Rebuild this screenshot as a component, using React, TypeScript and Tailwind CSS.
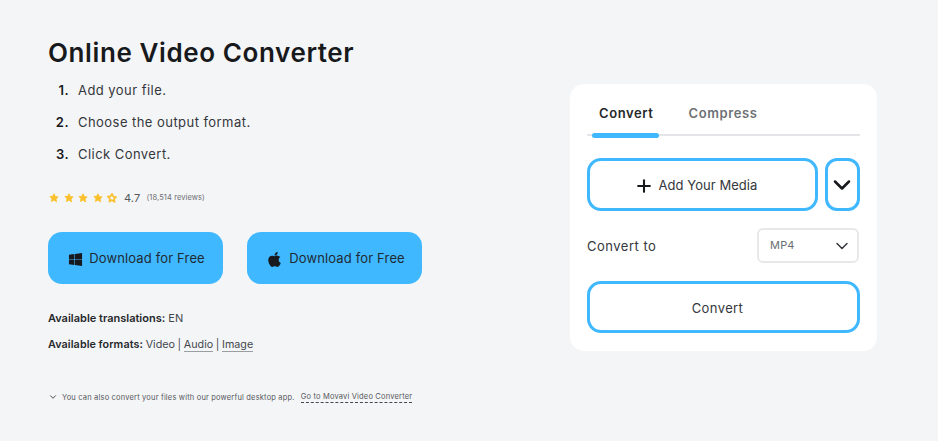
import { ChevronDown, Plus } from "lucide-react";
import { FaApple, FaWindows } from "react-icons/fa";

const steps = ["Add your file.", "Choose the output format.", "Click Convert."];

const Star = ({ half }: { half?: boolean }) => (
    <svg viewBox="0 0 24 24" className="w-[10px] h-[10px]">
        <path
            d="M12 2l3 6.6 7 .9-5.2 4.8 1.4 7.2L12 17l-6.2 3.5 1.4-7.2L2 8.5l7-.9z"
            fill={half ? "none" : "#fbc02d"}
            stroke="#fbc02d"
            strokeWidth={half ? 4 : 2}
            strokeLinejoin="round"
        />
    </svg>
);

const DownloadButton = ({ icon }: { icon: React.ReactNode }) => (
    <button className="w-[175px] h-[52px] rounded-[14px] bg-[#3fb8ff] flex items-center justify-center gap-[6px] pl-[2px] pt-[2px] text-[13px] tracking-[0.15px] text-[#1f2a33]">
        {icon}
        Download for Free
    </button>
);

export default function App() {
    return (
        <div className="h-[441px] w-[938px] overflow-hidden bg-[#f4f5f7] flex font-['Inter',sans-serif] text-[#26282b]">
            <div className="w-[570px] pl-12 pt-[37px] shrink-0">
                <h1 className="text-[26px] leading-[32px] font-semibold tracking-[0.6px] text-[#17191c]">Online Video Converter</h1>
                <ol className="mt-[11px] flex flex-col gap-[10px]">
                    {steps.map((step, index) => (
                        <li key={index} className="flex h-[22px] items-center text-[13px] tracking-[0.45px] text-[#34373b]">
                            <span className="w-[21px] text-right mr-[9px] font-semibold text-[#17191c]">{index + 1}.</span>
                            {step}
                        </li>
                    ))}
                </ol>
                <div className="mt-[22px] h-[20px] flex items-center">
                    <div className="flex ml-[1px] gap-[4.6px]">
                        <Star />
                        <Star />
                        <Star />
                        <Star />
                        <Star half />
                    </div>
                    <span className="ml-[6.5px] text-[11px] tracking-[0.2px] text-[#55585c]">4.7</span>
                    <span className="ml-[6px] text-[7.5px] tracking-[0.1px] text-[#6b6e72]">(18,514 reviews)</span>
                </div>
                <div className="mt-[24px] flex gap-6">
                    <DownloadButton icon={<FaWindows className="w-[15px] h-[15px] text-[#17191c]" />} />
                    <DownloadButton icon={<FaApple className="w-[17px] h-[17px] text-[#17191c]" />} />
                </div>
                <p className="mt-[26px] text-[11px] leading-[16px] text-[#44474b]">
                    <span className="font-semibold text-[#26282b]">Available translations:</span> EN
                </p>
                <p className="mt-[11px] text-[10.75px] leading-[16px] [word-spacing:-0.4px] text-[#44474b]">
                    <span className="font-semibold tracking-[0.1px] text-[#26282b]">Available formats:</span> Video |{" "}
                    <span className="border-b border-[#9a9da1]">Audio</span> |{" "}
                    <span className="border-b border-[#9a9da1]">Image</span>
                </p>
                <div className="mt-[38px] flex items-center text-[7.5px] tracking-[0.18px] text-[#55585c]">
                    <ChevronDown className="w-[10px] h-[10px] text-[#26282b] mr-[4px]" />
                    <span>You can also convert your files with our powerful desktop app.</span>
                    <span className="ml-[6px] border-b border-dashed border-[#44474b]">Go to Movavi Video Converter</span>
                </div>
            </div>
            <div className="mt-[84px] w-[307px] h-[267px] bg-white rounded-[14px] px-[17px] shrink-0">
                <div className="relative h-[52px] border-b-2 border-[#e3e5e8] flex items-center pl-[12px] pt-[10px] gap-[35px] text-[13px] font-semibold tracking-[0.6px]">
                    <span className="text-[#26282b]">Convert</span>
                    <span className="text-[#6e7175]">Compress</span>
                    <div className="absolute left-[5px] bottom-[-4px] w-[67px] h-[5px] rounded-full bg-[#3fb8ff]" />
                </div>
                <div className="mt-[22px] flex gap-[7px]">
                    <button className="w-[231px] h-[53px] rounded-[14px] border-[3px] border-[#3fb8ff] flex items-center justify-center gap-[5px] pr-[14px] pt-[2px] text-[13px] tracking-[0.05px] text-[#34373b]">
                        <Plus className="w-[20px] h-[20px] text-[#17191c]" strokeWidth={2.5} />
                        Add Your Media
                    </button>
                    <button className="w-[35px] h-[53px] rounded-[12px] border-[3px] border-[#3fb8ff] flex items-center justify-center pr-[1px]">
                        <ChevronDown className="w-[28px] h-[28px] shrink-0 text-[#17191c]" strokeWidth={2.2} />
                    </button>
                </div>
                <div className="mt-[17px] pr-[1px] flex items-center justify-between">
                    <span className="pt-[2px] text-[13px] tracking-[0.5px] text-[#34373b]">Convert to</span>
                    <div className="w-[102px] h-[35px] rounded-[6px] border-2 border-[#e6e8ea] flex items-center justify-between pl-[11px] pr-[5px] text-[11px] tracking-[0.2px] text-[#6b6e72]">
                        MP4
                        <ChevronDown className="w-[20px] h-[20px] text-[#34373b]" strokeWidth={1.8} />
                    </div>
                </div>
                <button className="mt-[18px] w-[273px] h-[52px] rounded-[14px] border-[3px] border-[#3fb8ff] pr-[12px] pt-[3px] text-[13px] tracking-[0.4px] text-[#34373b]">
                    Convert
                </button>
            </div>
        </div>
    );
}
